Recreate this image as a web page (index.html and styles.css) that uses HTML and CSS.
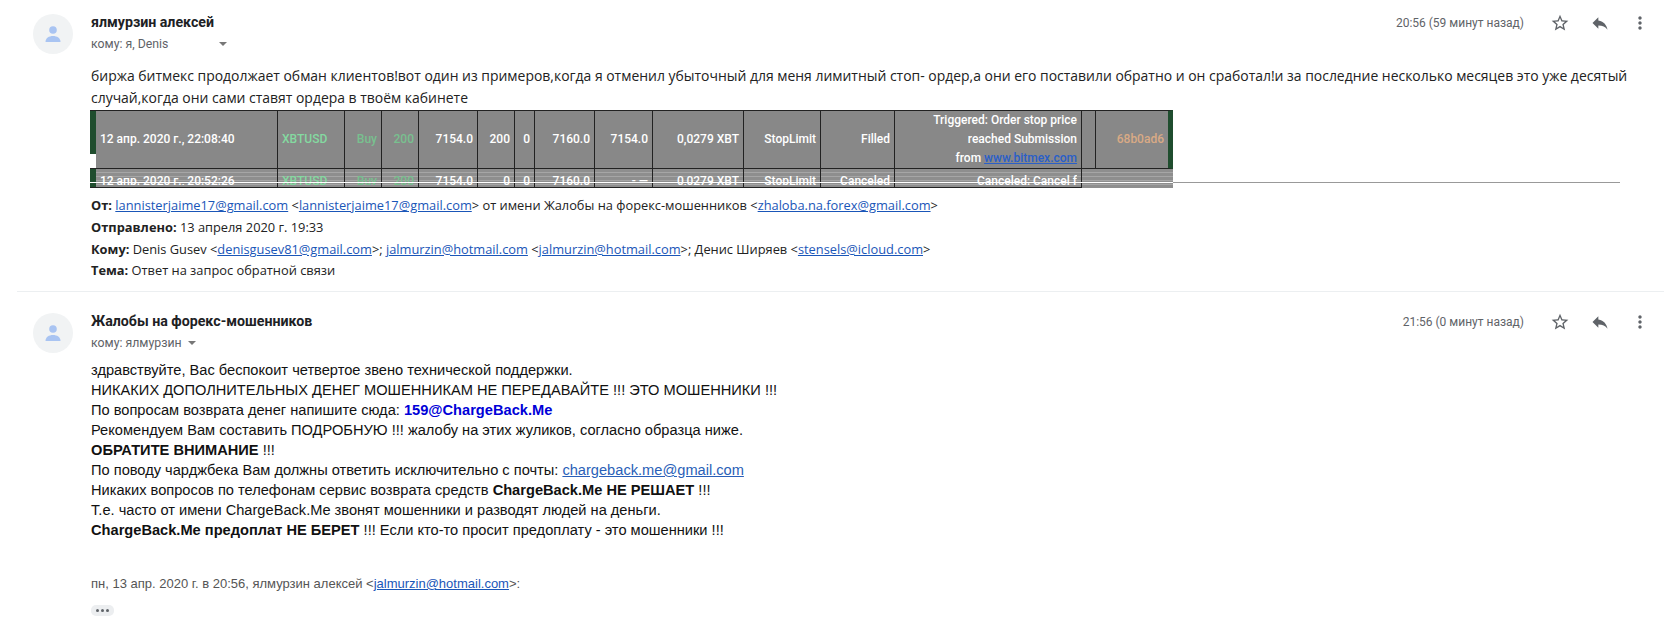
FILE: index.html
```html
<!DOCTYPE html>
<html lang="ru">
<head>
<meta charset="utf-8">
<title>Переписка</title>
<link rel="stylesheet" href="styles.css">
</head>
<body>
<article class="message first">
  <div class="avatar"><svg viewBox="0 0 40 40" width="40" height="40"><circle cx="20" cy="16" r="3.8" fill="#a9c4f2"/><path d="M12.500 28c0-4 3.400-6 7.500-6s7.500 2 7.500 6z" fill="#a9c4f2"/></svg></div>
  <div class="content">
    <header class="head">
      <div class="who">
        <div class="name">ялмурзин алексей</div>
        <div class="to">кому: я, Denis<span class="caret wide"></span></div>
      </div>
      <div class="actions">
        <span class="time">20:56 (59 минут назад)</span>
        <svg class="icon" viewBox="0 0 24 24"><path d="M22 9.24l-7.19-.62L12 2 9.19 8.63 2 9.24l5.46 4.73L5.82 21 12 17.27 18.18 21l-1.63-7.03L22 9.24zM12 15.4l-3.76 2.27 1-4.28-3.32-2.88 4.38-.38L12 6.1l1.71 4.04 4.38.38-3.32 2.88 1 4.28L12 15.4z"/></svg>
        <svg class="icon" viewBox="0 0 24 24"><path d="M10 9V5l-7 7 7 7v-4.1c5 0 8.5 1.6 11 5.1-1-5-4-10-11-11z"/></svg>
        <svg class="icon" viewBox="0 0 24 24"><path d="M12 8c1.100 0 2-.9 2-2s-.9-2-2-2-2 .9-2 2 .9 2 2 2zm0 2c-1.100 0-2 .9-2 2s.9 2 2 2 2-.9 2-2-.9-2-2-2zm0 6c-1.100 0-2 .9-2 2s.9 2 2 2 2-.9 2-2-.9-2-2-2z"/></svg>
      </div>
    </header>
    <p class="lead">биржа битмекс продолжает обман клиентов!вот один из примеров,когда я отменил убыточный для меня лимитный стоп- ордер,а они его поставили обратно и он сработал!и за последние несколько месяцев это уже десятый случай,когда они сами ставят ордера в твоём кабинете</p>
    <div class="orders">
      <table>
        <colgroup>
          <col class="c1"><col class="c2"><col class="c3"><col class="c4"><col class="c5"><col class="c6"><col class="c7"><col class="c8"><col class="c9"><col class="c10"><col class="c11"><col class="c12"><col class="c13"><col class="c14"><col class="c15">
        </colgroup>
        <tr class="r1">
          <td class="date">12 апр. 2020 г., 22:08:40</td><td class="sym">XBTUSD</td><td class="buy">Buy</td><td class="buy">200</td><td>7154.0</td><td>200</td><td>0</td><td>7160.0</td><td>7154.0</td><td>0,0279 XBT</td><td>StopLimit</td><td>Filled</td><td class="note">Triggered: Order stop price<br>reached Submission<br>from <a href="#">www.bitmex.com</a></td><td></td><td class="hash">68b0ad6</td>
        </tr>
        <tr class="r2">
          <td class="date"><div>12 апр. 2020 г., 20:52:26</div></td><td class="sym"><div>XBTUSD</div></td><td class="buy"><div>Buy</div></td><td class="buy"><div>200</div></td><td><div>7154.0</div></td><td><div>0</div></td><td><div>0</div></td><td><div>7160.0</div></td><td><div>- —</div></td><td><div>0,0279 XBT</div></td><td><div>StopLimit</div></td><td><div>Canceled</div></td><td class="note"><div>Canceled: Cancel f</div></td><td class="blank" colspan="2"></td>
        </tr>
      </table>
      <div class="rule"></div>
    </div>
    <div class="meta">
      <div><b>От:</b> <a href="#">lannisterjaime17@gmail.com</a> &lt;<a href="#">lannisterjaime17@gmail.com</a>&gt; от имени Жалобы на форекс-мошенников &lt;<a href="#">zhaloba.na.forex@gmail.com</a>&gt;</div>
      <div><b>Отправлено:</b> 13 апреля 2020 г. 19:33</div>
      <div><b>Кому:</b> Denis Gusev &lt;<a href="#">denisgusev81@gmail.com</a>&gt;; <a href="#">jalmurzin@hotmail.com</a> &lt;<a href="#">jalmurzin@hotmail.com</a>&gt;; Денис Ширяев &lt;<a href="#">stensels@icloud.com</a>&gt;</div>
      <div><b>Тема:</b> Ответ на запрос обратной связи</div>
    </div>
  </div>
</article>
<article class="message second">
  <div class="avatar"><svg viewBox="0 0 40 40" width="40" height="40"><circle cx="20" cy="16" r="3.8" fill="#a9c4f2"/><path d="M12.500 28c0-4 3.400-6 7.500-6s7.500 2 7.500 6z" fill="#a9c4f2"/></svg></div>
  <div class="content">
    <header class="head">
      <div class="who">
        <div class="name">Жалобы на форекс-мошенников</div>
        <div class="to">кому: ялмурзин<span class="caret"></span></div>
      </div>
      <div class="actions">
        <span class="time">21:56 (0 минут назад)</span>
        <svg class="icon" viewBox="0 0 24 24"><path d="M22 9.24l-7.19-.62L12 2 9.19 8.63 2 9.24l5.46 4.73L5.82 21 12 17.27 18.18 21l-1.63-7.03L22 9.24zM12 15.4l-3.76 2.27 1-4.28-3.32-2.88 4.38-.38L12 6.1l1.71 4.04 4.38.38-3.32 2.88 1 4.28L12 15.4z"/></svg>
        <svg class="icon" viewBox="0 0 24 24"><path d="M10 9V5l-7 7 7 7v-4.1c5 0 8.5 1.6 11 5.1-1-5-4-10-11-11z"/></svg>
        <svg class="icon" viewBox="0 0 24 24"><path d="M12 8c1.100 0 2-.9 2-2s-.9-2-2-2-2 .9-2 2 .9 2 2 2zm0 2c-1.100 0-2 .9-2 2s.9 2 2 2 2-.9 2-2-.9-2-2-2zm0 6c-1.100 0-2 .9-2 2s.9 2 2 2 2-.9 2-2-.9-2-2-2z"/></svg>
      </div>
    </header>
    <div class="body">
      <div>здравствуйте, Вас беспокоит четвертое звено технической поддержки.</div>
      <div>НИКАКИХ ДОПОЛНИТЕЛЬНЫХ ДЕНЕГ МОШЕННИКАМ НЕ ПЕРЕДАВАЙТЕ !!! ЭТО МОШЕННИКИ !!!</div>
      <div>По вопросам возврата денег напишите сюда: <b class="blue">159@ChargeBack.Me</b></div>
      <div>Рекомендуем Вам составить ПОДРОБНУЮ !!! жалобу на этих жуликов, согласно образца ниже.</div>
      <div><b>ОБРАТИТЕ ВНИМАНИЕ</b> !!!</div>
      <div>По поводу чарджбека Вам должны ответить исключительно с почты: <a href="#">chargeback.me@gmail.com</a></div>
      <div>Никаких вопросов по телефонам сервис возврата средств <b>ChargeBack.Me НЕ РЕШАЕТ</b> !!!</div>
      <div>Т.е. часто от имени ChargeBack.Me звонят мошенники и разводят людей на деньги.</div>
      <div><b>ChargeBack.Me предоплат НЕ БЕРЕТ</b> !!! Если кто-то просит предоплату - это мошенники !!!</div>
    </div>
    <div class="quote">пн, 13 апр. 2020 г. в 20:56, ялмурзин алексей &lt;<a href="#">jalmurzin@hotmail.com</a>&gt;:</div>
    <div class="more"><span></span><span></span><span></span></div>
  </div>
</article>
</body>
</html>
```
FILE: styles.css
```css
* { box-sizing: border-box; }
html, body { margin: 0; padding: 0; background: #fff; }
body { width: 1664px; height: 618px; overflow: hidden; font-family: Roboto, "Liberation Sans", sans-serif; color: #222; }
a { color: #1a56b8; text-decoration: underline; }
.message { display: flex; margin-left: 17px; }
.first { padding: 12px 0 0 16px; height: 292px; border-bottom: 1px solid #eceff1; }
.second { padding: 19px 0 0 16px; }
.avatar { width: 40px; height: 40px; border-radius: 50%; background: #f1f3f4; flex: none; margin-right: 18px; margin-top: 2px; }
.avatar svg { display: block; }
.content { flex: 1; min-width: 0; }
.head { display: flex; justify-content: space-between; align-items: flex-start; }
.name { font-size: 14.2px; font-weight: 700; line-height: 20px; color: #202124; }
.to { font-size: 12.3px; line-height: 16px; margin-top: 4px; color: #5f6368; display: flex; align-items: center; }
.caret { width: 0; height: 0; border: 4px solid transparent; border-top: 4px solid #777; border-bottom: 0; margin-left: 6px; }
.caret.wide { margin-left: 51px; }
.actions { display: flex; align-items: center; height: 22px; margin-right: 14px; }
.time { font-size: 12px; color: #5f6368; margin-right: 26px; }
.icon { width: 20px; height: 20px; fill: #5f6368; margin-left: 20px; display: block; }
.icon:first-of-type { margin-left: 0; }
.lead { margin: 13px 0 0; font-family: "Open Sans", sans-serif; font-size: 13.94px; line-height: 21.5px; color: #222; width: 1545px; }
.orders { position: relative; margin: 2px 0 0 -1px; height: 78px; }
table { border-collapse: separate; border-spacing: 0; table-layout: fixed; width: 1083px; font-family: Roboto, sans-serif; font-size: 12px; font-weight: 500; color: #fff; }
col.c1 { width: 188px; } col.c2 { width: 67px; } col.c3 { width: 37px; } col.c4 { width: 37px; } col.c5 { width: 59px; }
col.c6 { width: 37px; } col.c7 { width: 20px; } col.c8 { width: 60px; } col.c9 { width: 58px; } col.c10 { width: 91px; }
col.c11 { width: 77px; } col.c12 { width: 74px; } col.c13 { width: 187px; } col.c14 { width: 14px; } col.c15 { width: 77px; }
td { background: #888; border: solid #222; border-width: 0 1px 1px 0; padding: 0 4px; text-align: right; vertical-align: middle; line-height: 19px; white-space: nowrap; }
tr.r1 td { height: 59px; border-top-width: 1px; }
tr.r1 td.date { background: linear-gradient(to right, #1f4d2e 6px, #888 6px) top / 100% 43px no-repeat, linear-gradient(to right, #fff 6px, #888 6px); padding-left: 10px; text-align: left; }
tr.r1 td.hash { border-right: 5px solid #1f4d2e; }
tr.r2 td { height: 19px; padding-top: 0; padding-bottom: 0; background: repeating-linear-gradient(#8e8e8e 0 3px, #a6a6a6 3px 4px); }
tr.r2 td div { height: 13px; line-height: 18px; overflow: hidden; }
tr.r2 td.date { background: linear-gradient(to right, #1f4d2e 6px, transparent 6px), repeating-linear-gradient(#8e8e8e 0 3px, #a6a6a6 3px 4px); padding-left: 10px; text-align: left; }
td.sym { color: #84d9a0; text-align: left; }
.buy { color: #78c08f; }
td.hash { color: #d9aa85; }
.note a { color: #2a5fc8; }
tr.r2 td.blank { border: 0; }
.rule { position: absolute; left: 0; top: 72px; width: 1530px; height: 1px; background: linear-gradient(to right, #fff 1083px, #999 1083px); }
.meta { margin-top: 7px; font-family: "Open Sans", sans-serif; font-size: 12.84px; line-height: 21.8px; color: #222; }
.meta a { color: #1a56b8; }
.meta b { font-weight: 700; }
.body { margin-top: 9px; font-family: "Liberation Sans", Arial, sans-serif; font-size: 14.63px; line-height: 20px; color: #111; }
.body a { color: #2a5fb8; }
.blue { color: #0000d8; }
.quote { margin-top: 34px; font-family: "Liberation Sans", Arial, sans-serif; font-size: 13px; line-height: 20px; color: #555; }
.more { margin-top: 11px; width: 23px; height: 11px; background: #eceef0; border-radius: 5px; display: flex; align-items: center; justify-content: center; gap: 2px; }
.more span { width: 3px; height: 3px; border-radius: 50%; background: #5f6368; }
```
